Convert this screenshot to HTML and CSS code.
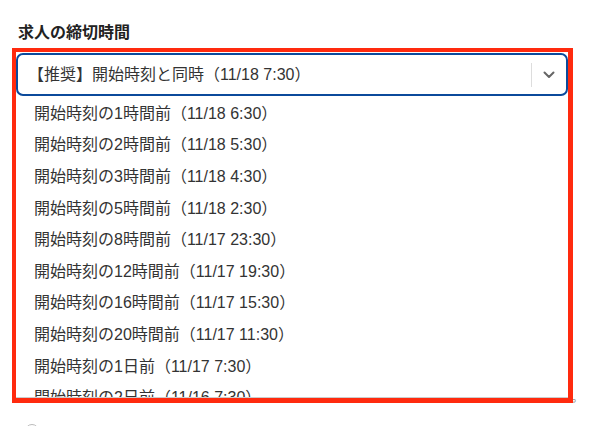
FILE: index.html
```html
<!DOCTYPE html>
<html lang="ja">

<head>
    <meta charset="UTF-8">
    <meta name="viewport" content="width=device-width, initial-scale=1.0">
    <title>求人の締切時間</title>
    <link rel="stylesheet" href="styles.css">
</head>

<body>

    <div class="form">
        <div class="field">
            <label class="field-label">求人の締切時間</label>

            <div class="select-wrap">
                <div class="select">
                    <div class="select-value">【推奨】開始時刻と同時（11/18 7:30）</div>
                    <span class="separator"></span>
                    <div class="indicator">
                        <svg width="12" height="8" viewBox="0 0 12 8">
                            <path d="M1.5 1.5 L6 6 L10.5 1.5" fill="none" stroke="#666" stroke-width="2" stroke-linecap="round" stroke-linejoin="round"/>
                        </svg>
                    </div>
                </div>

                <!-- open menu -->
                <ul class="menu">
                    <li class="option">開始時刻の1時間前（11/18 6:30）</li>
                    <li class="option">開始時刻の2時間前（11/18 5:30）</li>
                    <li class="option">開始時刻の3時間前（11/18 4:30）</li>
                    <li class="option">開始時刻の5時間前（11/18 2:30）</li>
                    <li class="option">開始時刻の8時間前（11/17 23:30）</li>
                    <li class="option">開始時刻の12時間前（11/17 19:30）</li>
                    <li class="option">開始時刻の16時間前（11/17 15:30）</li>
                    <li class="option">開始時刻の20時間前（11/17 11:30）</li>
                    <li class="option">開始時刻の1日前（11/17 7:30）</li>
                    <li class="option">開始時刻の2日前（11/16 7:30）</li>
                </ul>

                <div class="highlight"></div>
            </div>
        </div>

        <div class="field field-next">
            <label class="field-label">応募条件</label>
            <div class="textarea"></div>
            <p class="help">締切時間を過ぎると求人の掲載は終了し、利用時間はイベントの開始時刻をもとに自動で計算されます。</p>
        </div>

        <div class="field field-radio">
            <span class="radio"></span>
        </div>
    </div>

</body>

</html>
```

FILE: styles.css
```css
body {
    font-family: "Liberation Sans", "Noto Sans CJK JP", sans-serif;
    background-color: #fff;
    color: #333;
    margin: 0;
    padding: 0;
}

.form {
    width: 552px;
    padding: 21px 0 0 16px;
}

.field-label {
    display: block;
    font-size: 16px;
    font-weight: bold;
    line-height: 24px;
    color: #222;
    padding-left: 2px;
    margin-bottom: 8px;
}

.select-wrap {
    position: relative;
}

.select {
    display: flex;
    align-items: center;
    height: 43px;
    box-sizing: border-box;
    border: 2px solid #0b4a9b;
    border-radius: 7px;
    background-color: #fff;
}

.select-value {
    flex: 1;
    padding-left: 10px;
    font-size: 16px;
    line-height: 24px;
    color: #333;
}

.separator {
    width: 1px;
    height: 24px;
    background-color: #ddd;
}

.indicator {
    width: 34px;
    display: flex;
    align-items: center;
    justify-content: center;
}

.indicator svg {
    display: block;
}

.menu {
    position: absolute;
    top: 43px;
    left: 0;
    right: 0;
    height: 302px;
    margin: 0;
    padding: 0;
    list-style: none;
    box-sizing: border-box;
    border-bottom: 1px solid #ccc;
    background-color: #fff;
    overflow: hidden;
    z-index: 2;
}

.option {
    display: flex;
    align-items: center;
    height: 31.6px;
    padding-left: 18px;
    font-size: 16px;
    color: #333;
}

.highlight {
    position: absolute;
    top: -5px;
    left: -4px;
    right: -5px;
    height: 355px;
    box-sizing: border-box;
    border: 4px solid #ff2a0e;
    border-right-width: 5px;
    border-bottom-width: 5px;
    z-index: 3;
    pointer-events: none;
}

.field-next {
    margin-top: 16px;
}

.textarea {
    height: 236px;
    box-sizing: border-box;
    border: 1px solid #ccc;
    border-radius: 6px;
}

.help {
    margin: 12px 0 0;
    padding-left: 5px;
    font-size: 12px;
    line-height: 12px;
    color: #888;
    white-space: nowrap;
}

.field-radio {
    margin-top: 20px;
    padding-left: 9px;
}

.radio {
    display: block;
    width: 14px;
    height: 14px;
    box-sizing: border-box;
    border: 1px solid #bbb;
    border-radius: 50%;
}
```
